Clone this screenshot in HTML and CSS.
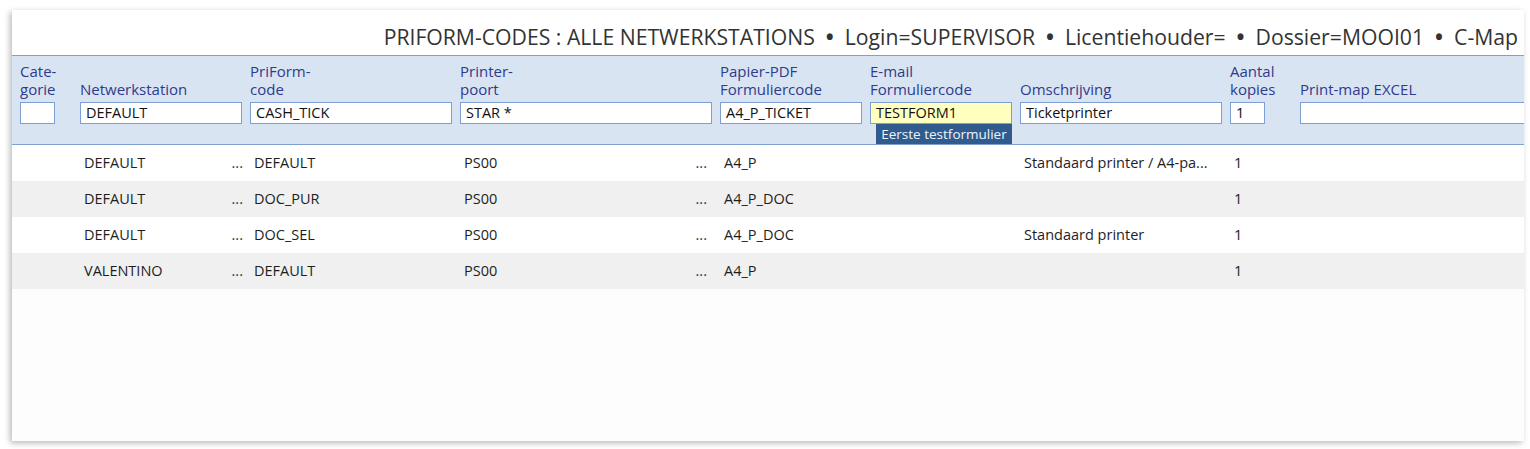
FILE: index.html
```html
<!DOCTYPE html>
<html lang="nl">
<head>
<meta charset="utf-8">
<title>PriForm-codes</title>
<link rel="stylesheet" href="styles.css">
</head>
<body>
<div class="panel">
  <div class="titlebar">
    <h1 class="title">PRIFORM-CODES : ALLE NETWERKSTATIONS &nbsp;<span class="bul">•</span>&nbsp; Login=SUPERVISOR &nbsp;<span class="bul">•</span>&nbsp; Licentiehouder= &nbsp;<span class="bul">•</span>&nbsp; Dossier=MOOI01 &nbsp;<span class="bul">•</span>&nbsp; C-Map</h1>
  </div>
  <div class="filters grid">
    <div class="fcol"><label class="lbl">Cate-<br>gorie</label><div class="inp w-cat"></div></div>
    <div class="fcol"><label class="lbl">Netwerkstation</label><div class="inp w-net">DEFAULT</div></div>
    <div class="fcol"><label class="lbl">PriForm-<br>code</label><div class="inp w-pri">CASH_TICK</div></div>
    <div class="fcol"><label class="lbl">Printer-<br>poort</label><div class="inp w-port">STAR *</div></div>
    <div class="fcol"><label class="lbl">Papier-PDF<br>Formuliercode</label><div class="inp w-pap">A4_P_TICKET</div></div>
    <div class="fcol tipwrap"><label class="lbl">E-mail<br>Formuliercode</label><div class="inp w-mail active">TESTFORM1</div><div class="tooltip">Eerste testformulier</div></div>
    <div class="fcol"><label class="lbl">Omschrijving</label><div class="inp w-oms">Ticketprinter</div></div>
    <div class="fcol"><label class="lbl">Aantal<br>kopies</label><div class="inp w-kop">1</div></div>
    <div class="fcol"><label class="lbl">Print-map EXCEL</label><div class="inp w-xls"></div></div>
  </div>
  <div class="rows">
    <div class="row grid">
      <div class="cell"></div>
      <div class="cell lk lk-net"><span>DEFAULT</span><span class="dots">...</span></div>
      <div class="cell">DEFAULT</div>
      <div class="cell lk lk-port"><span>PS00</span><span class="dots">...</span></div>
      <div class="cell">A4_P</div>
      <div class="cell"></div>
      <div class="cell ell">Standaard printer / A4-pa...</div>
      <div class="cell">1</div>
      <div class="cell"></div>
    </div>
    <div class="row grid alt">
      <div class="cell"></div>
      <div class="cell lk lk-net"><span>DEFAULT</span><span class="dots">...</span></div>
      <div class="cell">DOC_PUR</div>
      <div class="cell lk lk-port"><span>PS00</span><span class="dots">...</span></div>
      <div class="cell">A4_P_DOC</div>
      <div class="cell"></div>
      <div class="cell ell"></div>
      <div class="cell">1</div>
      <div class="cell"></div>
    </div>
    <div class="row grid">
      <div class="cell"></div>
      <div class="cell lk lk-net"><span>DEFAULT</span><span class="dots">...</span></div>
      <div class="cell">DOC_SEL</div>
      <div class="cell lk lk-port"><span>PS00</span><span class="dots">...</span></div>
      <div class="cell">A4_P_DOC</div>
      <div class="cell"></div>
      <div class="cell ell">Standaard printer</div>
      <div class="cell">1</div>
      <div class="cell"></div>
    </div>
    <div class="row grid alt">
      <div class="cell"></div>
      <div class="cell lk lk-net"><span>VALENTINO</span><span class="dots">...</span></div>
      <div class="cell">DEFAULT</div>
      <div class="cell lk lk-port"><span>PS00</span><span class="dots">...</span></div>
      <div class="cell">A4_P</div>
      <div class="cell"></div>
      <div class="cell ell"></div>
      <div class="cell">1</div>
      <div class="cell"></div>
    </div>
  </div>
</div>
</body>
</html>
```
FILE: styles.css
```css
* { box-sizing: border-box; }
html, body { margin: 0; padding: 0; background: #ffffff; }
body {
  font-family: "Open Sans", "Noto Sans", "Liberation Sans", sans-serif;
  font-size: 14.5px;
  color: #1e1e1e;
}
.panel {
  margin: 10px 6px 8px 12px;
  height: 431px;
  background: #fdfdfd;
  box-shadow: -2px 2px 6px rgba(0,0,0,0.28);
  overflow: hidden;
}
.titlebar {
  height: 45px;
  display: flex;
  justify-content: flex-end;
  align-items: flex-end;
  padding: 0 6px 4px 0;
  background: #ffffff;
}
.title {
  margin: 0;
  font-weight: normal;
  font-size: 21.2px;
  color: #333333;
  white-space: nowrap;
  line-height: 28px;
}
.bul { font-weight: bold; }
.grid {
  display: grid;
  grid-template-columns: 60px 170px 210px 260px 150px 150px 210px 70px 1fr;
  padding-left: 8px;
}
.filters {
  background: #d9e4f2;
  border-top: 1px solid #7da0d0;
  border-bottom: 1px solid #7da0d0;
  height: 90px;
  padding-top: 6px;
}
.fcol {
  display: flex;
  flex-direction: column;
  justify-content: flex-start;
}
.lbl {
  color: #2e3b8c;
  font-size: 15px;
  line-height: 18px;
  height: 36px;
  display: flex;
  align-items: flex-end;
  white-space: nowrap;
}
.inp {
  margin-top: 4px;
  height: 22px;
  background: #ffffff;
  border: 1px solid #7d9fd3;
  padding: 0 5px;
  line-height: 20px;
  font-size: 14.5px;
  color: #111;
  white-space: nowrap;
  overflow: hidden;
}
.inp.active { background: #ffffc0; }
.w-cat { width: 35px; }
.w-net { width: 162px; }
.w-pri { width: 202px; }
.w-port { width: 252px; }
.w-pap { width: 142px; }
.w-mail { width: 142px; }
.w-oms { width: 202px; }
.w-kop { width: 35px; }
.w-xls { width: 240px; }
.tipwrap { position: relative; }
.tooltip {
  position: absolute;
  left: 6px;
  top: 62px;
  width: 136px;
  height: 20px;
  background: #2f5b8f;
  color: #f0f4fa;
  font-size: 13.5px;
  line-height: 20px;
  text-align: center;
  white-space: nowrap;
}
.rows { display: flex; flex-direction: column; }
.row {
  height: 36px;
  align-items: center;
  background: #ffffff;
}
.row.alt { background: #f0f0f0; }
.cell {
  padding-left: 4px;
  white-space: nowrap;
  font-size: 14.5px;
  line-height: 20px;
}
.lk { display: flex; justify-content: space-between; }
.lk-net { padding-right: 7px; }
.lk-port { padding-right: 13px; }
.dots { color: #333; }
.ell {
  overflow: hidden;
  width: 200px;
}
```
